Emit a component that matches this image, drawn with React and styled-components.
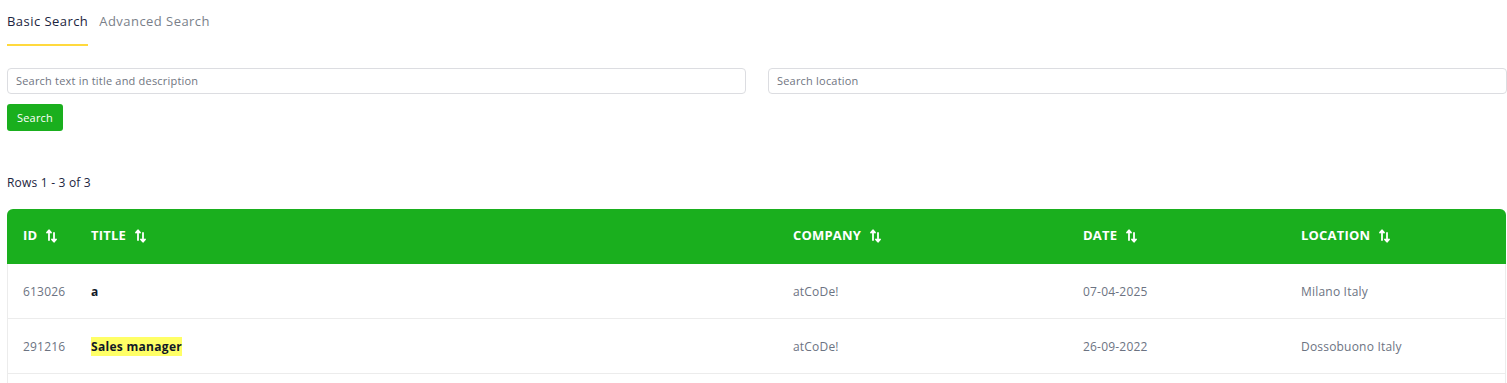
import React from "react";
import styled, { createGlobalStyle } from "styled-components";

const Global = createGlobalStyle`
  html, body { margin: 0; padding: 0; background: #fff; }
  body { font-family: "Open Sans", "Liberation Sans", sans-serif; color: #212529; }
  * { box-sizing: border-box; }
`;

const Page = styled.div`
  padding: 0 0 0 7px;
  width: 1507px;
`;

const Tabs = styled.div`
  display: flex;
  gap: 11px;
  height: 46px;
`;

const Tab = styled.div`
  font-size: 13px;
  color: ${p => (p.$active ? "#1b2540" : "#7a7f8a")};
  padding-top: 12px;
  height: 46px;
  border-bottom: 2px solid ${p => (p.$active ? "#ffd93d" : "transparent")};
  letter-spacing: 0.45px;
`;

const Fields = styled.div`
  display: grid;
  grid-template-columns: 739px 739px;
  gap: 22px;
  margin-top: 22px;
`;

const Input = styled.input`
  height: 26px;
  border: 1px solid #dcdde1;
  border-radius: 4px;
  padding: 0 8px 1px;
  font-family: inherit;
  font-size: 11px;
  letter-spacing: 0.2px;
  outline: none;
  &::placeholder { color: #70757f; }
`;

const Button = styled.button`
  margin-top: 10px;
  height: 27px;
  width: 56px;
  background: #1aaf1e;
  border: none;
  border-radius: 3px;
  color: #fff;
  font-family: inherit;
  font-size: 11px;
  letter-spacing: 0.2px;
  display: block;
  padding: 0 0 1px;
`;

const Count = styled.div`
  margin-top: 43px;
  font-size: 12px;
  color: #1b2540;
  height: 35px;
  letter-spacing: 0.2px;
`;

const Table = styled.div`
  width: 1499px;
  border-left: 1px solid #ececec;
  border-right: 1px solid #ececec;
  border-radius: 6px 6px 0 0;
`;

const Cols = "68px 702px 290px 218px 1fr";

const HeadRow = styled.div`
  display: grid;
  grid-template-columns: ${Cols};
  height: 55px;
  align-items: center;
  background: #1aaf1e;
  border-radius: 6px 6px 0 0;
  margin: 0 -1px;
  padding: 0 0 3px 16px;
`;

const HeadCell = styled.div`
  display: flex;
  align-items: center;
  gap: 9px;
  color: #fff;
  font-weight: 700;
  font-size: 13px;
  text-transform: uppercase;
  letter-spacing: 0.2px;
`;

const Row = styled.div`
  display: grid;
  grid-template-columns: ${Cols};
  height: 55px;
  align-items: center;
  border-bottom: 1px solid #ececec;
  padding-left: 15px;
`;

const Cell = styled.div`
  font-size: 12px;
  color: #6c7382;
  letter-spacing: 0.2px;
`;

const TitleCell = styled.div`
  font-size: 12px;
  font-weight: 700;
  color: #111827;
  letter-spacing: 0.3px;
`;

const Mark = styled.mark`
  background: #ffff66;
  color: inherit;
  padding: 1px 0;
`;

const SortIcon = () => (
  <svg width="11" height="14" viewBox="0 0 11 14" fill="none" style={{ marginTop: 2 }}>
    <path d="M3 11V1.5M1 3.6l2-2.3L5 3.6" stroke="#fff" strokeWidth="1.8" strokeLinecap="round" strokeLinejoin="round" />
    <path d="M8 4v8.5M6 10.4l2 2.3 2-2.3" stroke="#fff" strokeWidth="1.8" strokeLinecap="round" strokeLinejoin="round" />
  </svg>
);

const rows = [
  { id: "613026", title: "a", company: "atCoDe!", date: "07-04-2025", loc: "Milano Italy" },
  { id: "291216", title: "Sales manager", hl: true, company: "atCoDe!", date: "26-09-2022", loc: "Dossobuono Italy" },
  { id: "", title: "", company: "", date: "", loc: "" },
];

export default function App() {
  return (
    <Page>
      <Global />
      <Tabs>
        <Tab $active>Basic Search</Tab>
        <Tab>Advanced Search</Tab>
      </Tabs>
      <Fields>
        <Input placeholder="Search text in title and description" />
        <Input placeholder="Search location" />
      </Fields>
      <Button>Search</Button>
      <Count>Rows 1 - 3 of 3</Count>
      <Table>
        <HeadRow>
          {["ID", "Title", "Company", "Date", "Location"].map(h => (
            <HeadCell key={h}>{h}<SortIcon /></HeadCell>
          ))}
        </HeadRow>
        {rows.map((r, i) => (
          <Row key={i}>
            <Cell>{r.id}</Cell>
            <TitleCell>{r.hl ? <Mark>{r.title}</Mark> : r.title}</TitleCell>
            <Cell>{r.company}</Cell>
            <Cell>{r.date}</Cell>
            <Cell>{r.loc}</Cell>
          </Row>
        ))}
      </Table>
    </Page>
  );
}
